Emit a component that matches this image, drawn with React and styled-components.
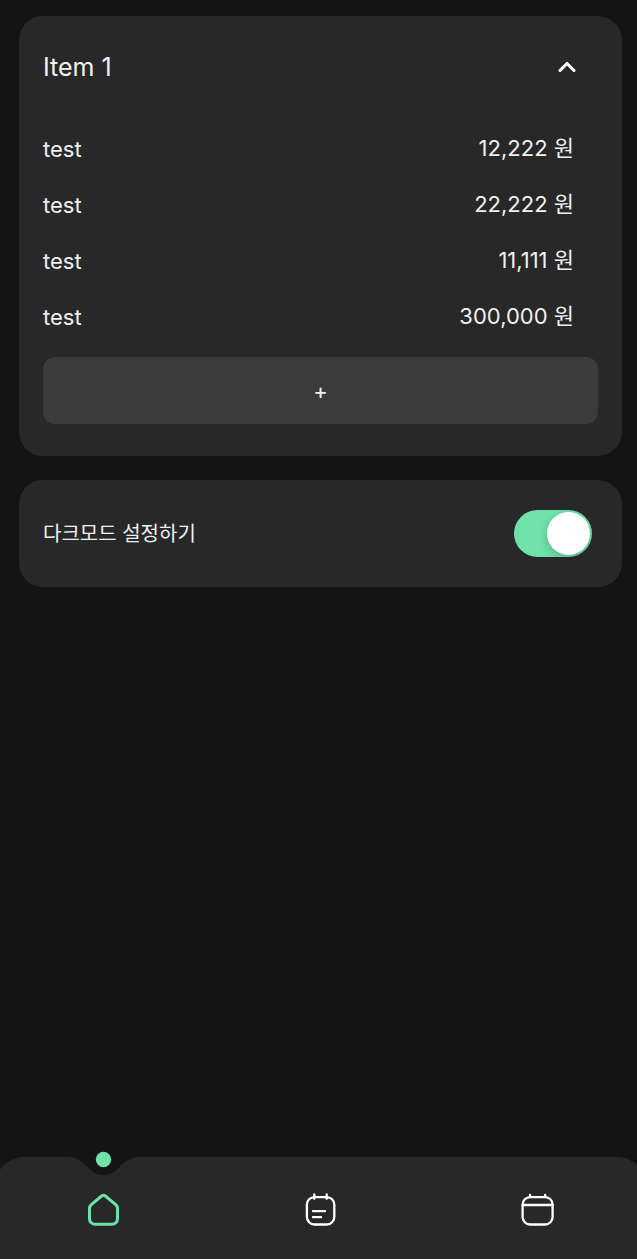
import React from "react";
import styled, { createGlobalStyle } from "styled-components";
import { ChevronUp } from "lucide-react";

const items = [
  { id: 1, name: "test", price: 12222 },
  { id: 2, name: "test", price: 22222 },
  { id: 3, name: "test", price: 11111 },
  { id: 4, name: "test", price: 300000 },
];

function App() {
  const [open, setOpen] = React.useState(true);
  const [dark, setDark] = React.useState(true);
  const [tab, setTab] = React.useState(0);

  return (
    <Page>
      <GlobalStyle />
      <Main>
        <Card>
          <CardHead
            type="button"
            aria-expanded={open}
            onClick={() => setOpen(!open)}
          >
            Item 1
            <Arrow size={28} strokeWidth={2.7} $open={open} />
          </CardHead>
          {open && (
            <CardBody>
              <List>
                {items.map((item) => (
                  <Row key={item.id}>
                    <span>{item.name}</span>
                    <Price>{item.price.toLocaleString("en-US")} 원</Price>
                  </Row>
                ))}
              </List>
              <AddButton type="button">+</AddButton>
            </CardBody>
          )}
        </Card>

        <SettingCard>
          <label htmlFor="dark">다크모드 설정하기</label>
          <Toggle
            id="dark"
            type="checkbox"
            checked={dark}
            onChange={() => setDark(!dark)}
          />
        </SettingCard>
      </Main>

      <NavBar>
        {tabs.map(({ label, icon }, i) => (
          <NavItem
            key={label}
            type="button"
            aria-label={label}
            $active={tab === i}
            onClick={() => setTab(i)}
          >
            {tab === i && <Notch />}
            {icon}
          </NavItem>
        ))}
      </NavBar>
    </Page>
  );
}

// 선택된 탭 위의 홈과 점
function Notch() {
  return (
    <NotchSvg viewBox="0 0 72 26">
      <path
        d="M0 6V7C9 7 14 11 19 16C24 21 28 25 36 25C44 25 48 21 53 16C58 11 63 7 72 7V6Z"
        fill="#141414"
      />
      <circle cx="36" cy="9.5" r="7.7" fill="#6ee2a9" />
    </NotchSvg>
  );
}

const HomeIcon = (
  <Icon>
    <path
      d="M4.5 16.5C4.5 14.9 5.1 13.7 6.3 12.7L16.6 4C17.8 3 19.2 3 20.4 4L30.7 12.7C31.9 13.7 32.5 14.9 32.5 16.5V26.4C32.5 30 30.1 32.3 26.5 32.3H10.5C6.9 32.3 4.5 30 4.5 26.4Z"
      strokeWidth="3"
    />
  </Icon>
);

const NoteIcon = (
  <Icon>
    <rect x="4.9" y="5.1" width="27.4" height="27.4" rx="7.5" />
    <path d="M12.3 2.5V6.8M24.7 2.5V6.8M11 19.2H23M11 25.2H19" />
  </Icon>
);

const CalendarIcon = (
  <Icon>
    <rect x="3.6" y="5.1" width="30" height="27.4" rx="7.5" />
    <path d="M11 3V5M26.2 3V5M3.6 13H33.6" />
  </Icon>
);

const tabs = [
  { label: "홈", icon: HomeIcon },
  { label: "메모", icon: NoteIcon },
  { label: "달력", icon: CalendarIcon },
];

function Icon({ children }) {
  return (
    <svg
      width="37"
      height="36"
      viewBox="0 0 37 36"
      fill="none"
      stroke="currentColor"
      strokeWidth="2.3"
      strokeLinecap="round"
      strokeLinejoin="round"
    >
      {children}
    </svg>
  );
}

const GlobalStyle = createGlobalStyle`
  * {
    box-sizing: border-box;
  }
  body {
    margin: 0;
    background-color: #141414;
    color: #f0f0f0;
    font-family: Inter, "Noto Sans CJK KR", sans-serif;
    font-size: 22px;
  }
  button {
    padding: 0;
    border: none;
    background: none;
    color: inherit;
    font: inherit;
    cursor: pointer;
  }
`;

const Page = styled.div`
  display: flex;
  flex-direction: column;
  min-height: 100vh;
  overflow: hidden;
`;

const Main = styled.main`
  flex: 1;
  display: flex;
  flex-direction: column;
  gap: 24px;
  padding: 16px 15px 24px 19px;
`;

const Card = styled.section`
  padding: 0 24px;
  border-radius: 24px;
  background-color: #282828;
`;

const CardHead = styled.button`
  display: flex;
  align-items: center;
  justify-content: space-between;
  width: 100%;
  height: 102px;
  padding-right: 17px;
  font-size: 25px;
  text-align: left;
`;

const Arrow = styled(ChevronUp)`
  color: #fff;
  transform: ${(props) => (props.$open ? "none" : "rotate(180deg)")};
`;

const CardBody = styled.div`
  padding-bottom: 32px;
`;

const List = styled.ul`
  margin: 0 0 12px;
  padding: 3px 24px 0 0;
  list-style: none;
`;

const Row = styled.li`
  display: flex;
  align-items: center;
  justify-content: space-between;
  height: 56px;
`;

const Price = styled.span`
  padding-bottom: 2px;
  line-height: 32px;
`;

const AddButton = styled.button`
  width: 100%;
  height: 67px;
  border-radius: 12px;
  background-color: #3b3b3b;
`;

const SettingCard = styled(Card)`
  display: flex;
  align-items: center;
  justify-content: space-between;
  padding: 30px 30px 30px 24px;
  font-size: 20px;

  label {
    padding-bottom: 2px;
  }
`;

const Toggle = styled.input`
  appearance: none;
  width: 78px;
  height: 47px;
  margin: 0;
  padding: 2px;
  border-radius: 24px;
  background-color: ${(props) => (props.checked ? "#6ee2a9" : "#3b3b3b")};
  overflow: hidden;
  cursor: pointer;

  &::before {
    content: "";
    display: block;
    width: 43px;
    height: 43px;
    margin-left: ${(props) => (props.checked ? "31px" : "0")};
    border-radius: 50%;
    background-color: #fff;
    box-shadow: 0 3px 8px rgba(0, 0, 0, 0.2);
  }
`;

const NavBar = styled.nav`
  display: grid;
  grid-template-columns: repeat(3, 1fr);
  margin: 0 -9px 0 -5px;
  border-radius: 29px 29px 0 0;
  background-color: #282828;
`;

const NavItem = styled.button`
  position: relative;
  display: flex;
  align-items: center;
  justify-content: center;
  height: 102px;
  padding-top: 4px;
  color: ${(props) => (props.$active ? "#6ee2a9" : "#fff")};
`;

const NotchSvg = styled.svg`
  position: absolute;
  top: -7px;
  left: 0;
  width: 100%;
  height: 26px;
`;

export default App;
